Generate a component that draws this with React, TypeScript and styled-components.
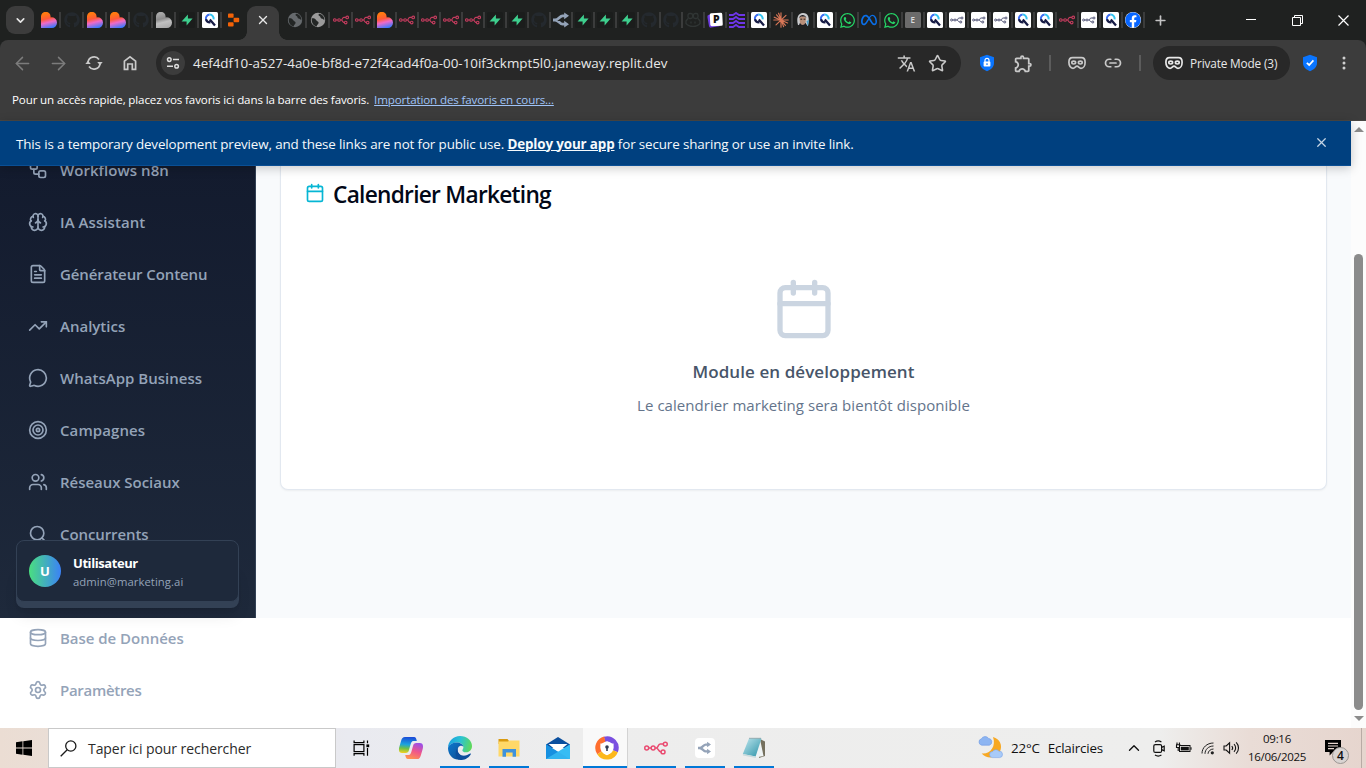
import React from "react";
import styled, { createGlobalStyle, css } from "styled-components";
import {
  ArrowLeft, ArrowRight, Brain, Calendar, ChevronDown, ChevronUp, Database, FileText,
  MessageCircle, Plus, Search, Settings, Star, Target, TrendingUp, Users, Workflow, X, Link2,
} from "lucide-react";
import { FaGithub, FaWhatsapp, FaFacebook } from "react-icons/fa";
import { FaMeta } from "react-icons/fa6";
import { MdTranslate, MdOutlineExtension } from "react-icons/md";

const Global = createGlobalStyle`
  * { box-sizing: border-box; }
  html, body { margin: 0; padding: 0; overflow: hidden; }
  body { font-family: "Open Sans", "Noto Sans", sans-serif; background: #fff; }
  svg { display: block; flex: none; }
`;

const Screen = styled.div`
  width: 1366px;
  height: 768px;
  display: flex;
  flex-direction: column;
  overflow: hidden;
`;

/* ---------- browser chrome ---------- */
const TabStrip = styled.div`
  height: 40px;
  flex: none;
  display: flex;
  align-items: center;
  background: #1f2120;
  padding-left: 6px;
`;
const TabSearch = styled.div`
  width: 28px;
  height: 28px;
  border-radius: 9px;
  background: #3c3c3c;
  color: #e6e6e6;
  display: grid;
  place-items: center;
  margin-right: 4px;
`;
const Tab = styled.div<{ $w: number; $last?: boolean }>`
  width: ${(p) => p.$w}px;
  height: 16px;
  padding-left: ${(p) => (p.$w > 22 ? 3 : 2)}px;
  border-right: 2px solid ${(p) => (p.$last ? "transparent" : "#3b3c3c")};
`;
const ActiveTab = styled.div`
  position: relative;
  align-self: flex-end;
  width: 32px;
  height: 34px;
  margin: 0 5px 0 2px;
  border-radius: 9px 9px 0 0;
  background: #3c3c3c;
  color: #e8e8e8;
  display: grid;
  place-items: center;
  padding-bottom: 6px;
  &::before, &::after {
    content: "";
    position: absolute;
    bottom: 0;
    width: 8px;
    height: 8px;
  }
  &::before { left: -8px; background: radial-gradient(circle at 0 0, transparent 7.5px, #3c3c3c 8px); }
  &::after { right: -8px; background: radial-gradient(circle at 100% 0, transparent 7.5px, #3c3c3c 8px); }
`;
const NewTab = styled.div`
  margin-left: 8px;
  color: #c4c4c4;
`;
const WindowButtons = styled.div`
  margin-left: auto;
  display: flex;
  color: #fff;
`;
const WindowButton = styled.div`
  width: 46px;
  height: 40px;
  display: grid;
  place-items: center;
`;
const ToolbarBack = styled.div`
  background: #1f2120;
  flex: none;
`;
const Toolbar = styled.div`
  height: 46px;
  display: flex;
  align-items: center;
  background: #3c3c3c;
  border-radius: 8px 8px 0 0;
  padding-left: 12px;
  color: #c9c9c9;
`;
const Tool = styled.div<{ $w: number; $c?: string }>`
  width: ${(p) => p.$w}px;
  display: grid;
  place-items: center;
  color: ${(p) => p.$c || "#c9c9c9"};
`;
const AddressBar = styled.div`
  width: 805px;
  height: 34px;
  border-radius: 17px;
  background: #282828;
  display: flex;
  align-items: center;
  padding: 0 14px 0 5px;
  gap: 12px;
`;
const SiteInfo = styled.div`
  width: 24px;
  height: 24px;
  margin-right: -4px;
  border-radius: 50%;
  background: #3c3c3c;
  display: grid;
  place-items: center;
`;
const Url = styled.span`
  flex: 1;
  white-space: nowrap;
  font-size: 13.4px;
  letter-spacing: -0.01px;
  color: #e8e8e8;
`;
const Divider = styled.div`
  width: 2px;
  height: 16px;
  background: #5c5c5c;
`;
const PrivatePill = styled.div`
  width: 137px;
  height: 34px;
  margin-left: 12px;
  border-radius: 17px;
  background: #282828;
  display: flex;
  align-items: center;
  gap: 7px;
  padding-left: 12px;
  font-size: 11.8px;
  letter-spacing: -0.14px;
  line-height: 16px;
  padding-bottom: 1px;
  white-space: nowrap;
  color: #e8e8e8;
`;
const Bookmarks = styled.div`
  flex: none;
  height: 35px;
  background: #3c3c3c;
  border-bottom: 1px solid #4a4744;
  padding: 0 0 7px 12px;
  display: flex;
  align-items: center;
  gap: 5px;
  color: #fff;
  font-size: 11.6px;
  letter-spacing: -0.14px;
  white-space: nowrap;
`;
const BookmarkLink = styled.span`
  color: #9fc3f8;
  text-decoration: underline;
`;

/* ---------- page ---------- */
const Viewport = styled.div`
  height: 607px;
  flex: none;
  display: flex;
  background: #fff;
`;
const Page = styled.div`
  width: 1351px;
  display: flex;
  flex-direction: column;
`;
const Banner = styled.div`
  position: relative;
  z-index: 3;
  height: 45px;
  flex: none;
  background: #00407f;
  border-bottom: 1px solid #0a4f95;
  box-shadow: 0 2px 10px rgba(0, 0, 0, 0.22);
  display: flex;
  align-items: center;
  padding: 1px 22px 0 16px;
  color: #f5f9fc;
  font-size: 13.4px;
  font-weight: 500;
  letter-spacing: -0.13px;
  white-space: pre;
`;
const BannerLink = styled.b`
  text-decoration: underline;
  font-weight: 700;
`;
const BannerClose = styled.div`
  margin: 0 0 2px auto;
  color: #c5d5e5;
`;
const AppBody = styled.div`
  height: 452px;
  display: flex;
  background: #f8fafc;
`;
const Sidebar = styled.aside`
  position: relative;
  width: 256px;
  flex: none;
  padding: 0 16px;
  border-right: 1px solid #334155;
  background: linear-gradient(#131b2e, #1e293b);
`;
const Nav = styled.nav`
  margin-top: -22px;
  display: flex;
  flex-direction: column;
`;
const NavItem = styled.div<{ $s?: number }>`
  height: 52px;
  flex: none;
  padding-left: 12px;
  display: flex;
  align-items: center;
  gap: 12px;
  color: #94a3b8;
  font-size: 15px;
  font-weight: 600;
  letter-spacing: ${(p) => p.$s ?? -0.1}px;
  white-space: nowrap;
`;
const ActiveItem = styled.div`
  height: 44px;
  flex: none;
  margin: 4px 0;
  border-radius: 8px;
  background: #334155;
  box-shadow: 0 10px 15px -3px rgba(0, 0, 0, 0.1), 0 4px 6px -4px rgba(0, 0, 0, 0.1);
`;
const UserCard = styled.div`
  position: absolute;
  left: 16px;
  right: 16px;
  top: 374px;
  height: 62px;
  border: 1px solid #334155;
  border-radius: 8px;
  background: #1e293b;
  display: flex;
  align-items: center;
  padding-left: 12px;
  gap: 12px;
`;
const Avatar = styled.div`
  width: 32px;
  height: 32px;
  border-radius: 50%;
  background: linear-gradient(90deg, #4ade80, #3b82f6);
  color: #fff;
  display: grid;
  place-items: center;
  font-size: 13px;
  font-weight: 700;
`;
const UserText = styled.div`
  display: flex;
  flex-direction: column;
  margin-top: 1px;
`;
const UserName = styled.span`
  font-size: 13px;
  line-height: 19px;
  font-weight: 700;
  letter-spacing: -0.43px;
  color: #fff;
`;
const UserMail = styled.span`
  font-size: 11.3px;
  line-height: 17px;
  letter-spacing: 0.06px;
  color: #94a3b8;
`;
const Main = styled.main`
  flex: 1;
  padding: 0 24px;
`;
const Card = styled.section`
  height: 324px;
  background: #fff;
  border: 1px solid #e2e8f0;
  border-top: 0;
  border-radius: 0 0 8px 8px;
  box-shadow: 0 1px 2px rgba(0, 0, 0, 0.05);
  display: flex;
  flex-direction: column;
  align-items: center;
`;
const CardHead = styled.div`
  align-self: stretch;
  display: flex;
  align-items: center;
  gap: 8px;
  height: 56px;
  padding-left: 24px;
  color: #06b6d4;
  & > svg { margin-bottom: 2px; }
`;
const CardTitle = styled.h1`
  margin: 0;
  font-size: 22.7px;
  font-weight: 600;
  letter-spacing: -0.73px;
  white-space: nowrap;
  color: #020817;
`;
const EmptyIcon = styled.div`
  margin-top: 55px;
  color: #cbd5e1;
`;
const EmptyTitle = styled.h2`
  margin: 17px 0 0;
  font-size: 17px;
  line-height: 28px;
  font-weight: 600;
  letter-spacing: 0.08px;
  color: #475569;
`;
const EmptyText = styled.p`
  margin: 7px 0 0;
  font-size: 15px;
  line-height: 24px;
  letter-spacing: 0.05px;
  color: #64748b;
`;
const Scrollbar = styled.div`
  width: 15px;
  background: #fcfcfc;
  display: flex;
  flex-direction: column;
  align-items: center;
  padding: 6px 0;
`;
const ScrollThumb = styled.div`
  width: 9px;
  height: 456px;
  margin: auto 0 6px;
  border-radius: 5px;
  background: #8b8b8b;
`;
const ScrollArrow = styled.div<{ $down?: boolean }>`
  border: 5px solid transparent;
  ${(p) => (p.$down
    ? css`border-top-color: #8b8b8b; border-bottom: 0; margin-bottom: 1px;`
    : css`border-bottom-color: #8b8b8b; border-top: 0;`)}
`;

/* ---------- taskbar ---------- */
const Taskbar = styled.div`
  height: 40px;
  flex: none;
  display: flex;
  background: linear-gradient(90deg, #ebddd3 0, #eaded6 50px, #e9eaf0 350px, #ededed 560px, #eeeeed 1160px, #e9dcd6 1250px, #e6d5ce 1366px);
  color: #111;
`;
const StartButton = styled.div`
  width: 48px;
  display: grid;
  place-items: center;
`;
const SearchBox = styled.div`
  width: 288px;
  margin-right: 1px;
  border: 1px solid #c9c9c9;
  background: #fff;
  display: flex;
  align-items: center;
  gap: 11px;
  padding-left: 11px;
  font-size: 14px;
  letter-spacing: -0.07px;
  color: #2b2b2b;
`;
const TaskApp = styled.div<{ $line?: boolean; $active?: boolean }>`
  width: 49px;
  display: grid;
  place-items: center;
  ${(p) => p.$line && css`
    background: linear-gradient(#0078d7, #0078d7) center bottom / 40px 2px no-repeat;
  `}
  ${(p) => p.$active && css`
    background: linear-gradient(#0078d7, #0078d7) center bottom / 100% 2px no-repeat, #f9f9f9;
    border-right: 1px solid #d3d3d3;
    width: 45px;
    margin: 0 3px 0 1px;
    padding-left: 3px;
  `}
`;
const Tray = styled.div`
  margin-left: auto;
  display: flex;
  align-items: center;
`;
const Weather = styled.div`
  display: flex;
  align-items: center;
  font-size: 13.4px;
  letter-spacing: -0.2px;
  white-space: nowrap;
  gap: 8px;
  width: 143px;
`;
const TrayIcon = styled.div<{ $w: number }>`
  width: ${(p) => p.$w}px;
  display: grid;
  place-items: center;
`;
const Clock = styled.div`
  width: 72px;
  font-size: 11.5px;
  line-height: 18px;
  letter-spacing: -0.3px;
  text-align: center;
  white-space: nowrap;
  padding-bottom: 1px;
`;
const Notifications = styled.div`
  position: relative;
  width: 48px;
  height: 40px;
  padding: 12px 0 0 12px;
`;
const Badge = styled.span`
  position: absolute;
  left: 19px;
  top: 19px;
  width: 17px;
  height: 17px;
  border-radius: 50%;
  border: 1px solid #9b9692;
  background: #d9d4d2;
  display: grid;
  place-items: center;
  font-size: 12px;
  line-height: 15px;
  font-weight: 600;
`;
const DesktopEdge = styled.div`
  width: 5px;
  height: 40px;
  border-left: 1px solid #b9aba5;
`;

/* ---------- favicons ---------- */
const Lovable = ({ grey }: { grey?: boolean }) => (
  <svg width="16" height="16" viewBox="0 0 16 16">
    <defs>
      <linearGradient id={grey ? "lvG" : "lvC"} x1="0.3" y1="0" x2="0.55" y2="1">
        <stop offset="0.1" stopColor={grey ? "#a8a8a8" : "#ff7a10"} />
        <stop offset="0.42" stopColor={grey ? "#8c8c8c" : "#ff5a38"} />
        <stop offset="0.65" stopColor={grey ? "#c0c0c0" : "#ef6ac8"} />
        <stop offset="1" stopColor={grey ? "#aaaaaa" : "#3d78ff"} />
      </linearGradient>
    </defs>
    <path d="M0 4.8A4.8 4.8 0 0 1 9.6 4.4V5.4A5.3 5.3 0 0 1 16 10.6A5.3 5.3 0 0 1 10.8 16H0Z" fill={`url(#${grey ? "lvG" : "lvC"})`} />
  </svg>
);
const Supabase = () => (
  <svg width="16" height="16" viewBox="0 0 16 16">
    <rect width="16" height="16" rx="2" fill="#1b1d1c" />
    <path d="M8.9 2.4V6.6H13.6L7.6 13.6V9.4H2.6Z" fill="#3ecf8e" />
  </svg>
);
const QIcon = () => (
  <svg width="16" height="16" viewBox="0 0 16 16">
    <rect width="16" height="16" rx="1.5" fill="#fff" />
    <g fill="none" strokeWidth="2">
      <path d="M4.2 8.2A4 4 0 0 1 7.6 2.6" stroke="#3c6df0" />
      <path d="M7.6 2.6A4 4 0 0 1 11.6 7.4" stroke="#35c5f0" />
      <path d="M4 7.2A4.2 4.2 0 0 0 8.4 10.4M7.8 7.6L13 13.4" stroke="#171c45" strokeWidth="2.3" />
    </g>
  </svg>
);
const Replit = () => (
  <svg width="16" height="16" viewBox="0 0 16 16" fill="#f26207">
    <rect x="3" y="1.5" width="5.6" height="4.3" rx=".9" /><rect x="8.6" y="5.8" width="5.6" height="4.4" rx=".9" /><rect x="3" y="10.2" width="5.6" height="4.3" rx=".9" />
  </svg>
);
const Globe = ({ c }: { c: string }) => (
  <svg width="16" height="16" viewBox="0 0 16 16">
    <circle cx="8" cy="8" r="7.2" fill={c} />
    <path d="M1.8 6.2C4 6 5.6 6.6 6.3 8.2S8.8 9.2 8.6 11C8.4 12.4 7 12.6 6.6 14.4C3.4 13.7 1.2 10.5 1.8 6.2ZM9 1.8C8.1 3 8.6 3.8 9.8 4.2S10 6 11.4 6.4S13.8 7 14.3 8.6C14.8 5.2 12.6 2.4 9 1.8Z" fill="#232625" />
  </svg>
);
const N8n = ({ c, size = 16, w = 1.1 }: { c: string; size?: number; w?: number }) => (
  <svg width={size} height={size} viewBox="0 0 16 16" fill="none" stroke={c} strokeWidth={w}>
    <circle cx="1.8" cy="8" r="1.3" /><circle cx="6.1" cy="8" r="1.3" />
    <circle cx="14.2" cy="5.4" r="1.3" /><circle cx="12.7" cy="10.6" r="1.3" />
    <path d="M3.1 8H4.8M7.4 8H8.2C9.6 8 9.2 5.4 10.8 5.4H12.9M8.2 8C9.6 8 9.4 10.6 11.4 10.6" />
  </svg>
);
const N8nWhite = () => (
  <svg width="16" height="16" viewBox="0 0 16 16">
    <rect width="16" height="16" rx="1.5" fill="#fff" />
    <g fill="none" stroke="#4c4f72" strokeWidth=".95">
      <circle cx="2.6" cy="8" r="1" /><circle cx="6" cy="8" r="1" /><circle cx="13" cy="6" r="1" /><circle cx="11.8" cy="10" r="1" />
      <path d="M3.6 8H5M7 8H8C9 8 8.8 6 10 6H12M8 8C9 8 9 10 10.8 10" />
    </g>
  </svg>
);
const Fork = ({ size = 16 }: { size?: number }) => (
  <svg width={size} height={size} viewBox="0 0 16 16" fill="none" stroke="#94a3b8" strokeWidth="2.8">
    <path d="M12.5 3.8H9.5C6.8 3.8 5.5 8 2 8H0M2 8C5.5 8 6.8 12.2 9.5 12.2H12.5" />
    <path d="M11.2 .4L16 3.8L11.2 7.2ZM11.2 8.8L16 12.2L11.2 15.6Z" fill="#94a3b8" stroke="none" />
  </svg>
);
const CopilotFace = () => (
  <svg width="16" height="16" viewBox="0 0 16 16" fill="none" stroke="#303534" strokeWidth="1.3">
    <rect x="3" y="1.5" width="4.6" height="5" rx="1.8" /><rect x="8.4" y="1.5" width="4.6" height="5" rx="1.8" />
    <path d="M3 6.5L1 9V11.5C4 15.3 12 15.3 15 11.5V9L13 6.5M6 9.5V11.5M10 9.5V11.5" />
  </svg>
);
const PaperP = () => (
  <svg width="16" height="16" viewBox="0 0 16 16">
    <rect x="1" y="2" width="12" height="13" rx="2" fill="#6d3be0" transform="rotate(-10 7 8)" />
    <rect x="3" y="1" width="12.5" height="13" rx="1.5" fill="#fff" transform="rotate(-3 9 7)" />
    <text x="6" y="11.4" fontFamily="Open Sans" fontWeight="800" fontSize="10.5" fill="#111">P</text>
  </svg>
);
const Waves = () => (
  <svg width="16" height="16" viewBox="0 0 16 16" fill="none" stroke="#6d35e8" strokeWidth="1.9">
    <path d="M0 3H4L7 1L10 3H16M0 7H4L7 5L10 7H16M0 11H4L7 9L10 11H16M0 15H4L7 13L10 15H16" />
  </svg>
);
const Claude = () => (
  <svg width="16" height="16" viewBox="0 0 16 16" stroke="#d97757" strokeWidth="1.15" strokeLinecap="round">
    <path d="M8 .8V15.2M.8 8H15.2M3.6 2.8L12.4 13.4M13 3.4L3 12.8M5.6 1.2L10.6 14.6M1.2 5.2L14.6 11" />
  </svg>
);
const Portrait = () => (
  <svg width="16" height="16" viewBox="0 0 16 16">
    <path d="M3 13C1 6 3 1 8 1S15 5 13 14Z" fill="#c9cbcd" />
    <path d="M4.5 6C5 3.4 10 3 11 6L10.5 11C9 14 6 14 5 11Z" fill="#b98f78" />
    <path d="M4 6C5 2 10 1.8 11.5 6L9.5 4.6H6ZM3.6 14L5 10.8C6.4 13.8 9 13.8 10.4 10.8L12.5 14Z" fill="#1c1c20" />
    <path d="M5.4 7.2H7.2M8.6 7.2H10.4" stroke="#222" strokeWidth="1" />
    <path d="M11.5 9L14 8L12.8 14.5Z" fill="#4aa0c8" />
  </svg>
);
const LetterE = () => (
  <svg width="16" height="16" viewBox="0 0 16 16">
    <rect width="16" height="16" rx="1.5" fill="#6b6b6b" />
    <text x="5.6" y="10.9" fontFamily="Open Sans" fontWeight="600" fontSize="8" fill="#ddd">E</text>
  </svg>
);

const favicon = (kind: string) => {
  switch (kind) {
    case "lov": return <Lovable />;
    case "lovg": return <Lovable grey />;
    case "gh": return <FaGithub size={16} color="#24292e" />;
    case "supa": return <Supabase />;
    case "q": return <QIcon />;
    case "rep": return <Replit />;
    case "g1": return <Globe c="#666a6d" />;
    case "g2": return <Globe c="#9a9a9a" />;
    case "n": return <N8n c="#c43c5e" />;
    case "nw": return <N8nWhite />;
    case "fork": return <Fork />;
    case "cop": return <CopilotFace />;
    case "p": return <PaperP />;
    case "wave": return <Waves />;
    case "cl": return <Claude />;
    case "man": return <Portrait />;
    case "wa": return <FaWhatsapp size={17} color="#25d366" />;
    case "meta": return <FaMeta size={16} color="#0a6fe8" />;
    case "e": return <LetterE />;
    default: return <FaFacebook size={16} color="#0866ff" style={{ background: "#fff", borderRadius: 8 }} />;
  }
};
const leftTabs = "lov gh lov lov gh lovg supa q rep".split(" ");
const rightTabs = "g1 g2 n n lov n n n n supa supa gh fork supa supa supa gh gh cop p wave q cl man q wa meta wa e q nw nw nw q q n nw q fb".split(" ");

/* ---------- toolbar glyphs ---------- */
const HomeGlyph = () => (
  <svg width="14" height="16" viewBox="0 0 14 16" fill="none" stroke="currentColor" strokeWidth="1.7">
    <path d="M1.4 6.2L7 1.8L12.6 6.2V14.4H9.3V9H4.7V14.4H1.4Z" />
  </svg>
);
const Mask = () => (
  <svg width="18" height="14" viewBox="0 0 18 14" fill="none" stroke="currentColor" strokeWidth="1.7">
    <path d="M4.5 1.6H13.5C16 1.6 17.1 3.8 17.1 6.2C17.1 9.6 15.4 12.3 13 12.3C11 12.3 10.6 10.2 9 10.2S7 12.3 5 12.3C2.6 12.3 .9 9.6 .9 6.2C.9 3.8 2 1.6 4.5 1.6Z" />
    <ellipse cx="5.7" cy="6.6" rx="1.9" ry="1.4" /><ellipse cx="12.3" cy="6.6" rx="1.9" ry="1.4" />
  </svg>
);
const Reload = () => (
  <svg width="18" height="16" viewBox="0 0 18 16" fill="none" stroke="currentColor" strokeWidth="1.7">
    <path d="M3 7.2A6.1 6.1 0 0 1 14 4.4M15 8.8A6.1 6.1 0 0 1 4 11.6" />
    <path d="M.3 9H5.8L3 5.8ZM12.2 7H17.7L15 10.2Z" fill="currentColor" stroke="none" />
  </svg>
);
const Tune = () => (
  <svg width="14" height="14" viewBox="0 0 14 14" fill="none" stroke="#dedede" strokeWidth="1.5">
    <circle cx="3.3" cy="3.6" r="1.8" /><path d="M7 3.6H13M1 10.3H7" /><circle cx="10.6" cy="10.3" r="1.8" />
  </svg>
);
const Shield = ({ lock }: { lock?: boolean }) => (
  <svg width="16" height="18" viewBox="0 0 16 18">
    <path d="M8 .8L15 3.2V9C15 13 12 15.6 8 17.2C4 15.6 1 13 1 9V3.2Z" fill="#0a75ff" />
    {lock ? (
      <g><path d="M6 8V6.3A2 2 0 0 1 10 6.3V8" fill="none" stroke="#fff" strokeWidth="1.2" /><rect x="4.6" y="7.6" width="6.8" height="5" rx=".8" fill="#fff" /><path d="M8 9.2V11" stroke="#0a75ff" strokeWidth="1.2" /></g>
    ) : <path d="M4.8 8.8L7.2 11L11.4 6.4" fill="none" stroke="#fff" strokeWidth="1.7" />}
  </svg>
);
const Dots = () => (
  <svg width="4" height="14" viewBox="0 0 4 14" fill="#d0d0d0"><circle cx="2" cy="2" r="1.5" /><circle cx="2" cy="7" r="1.5" /><circle cx="2" cy="12" r="1.5" /></svg>
);

/* ---------- taskbar glyphs ---------- */
const WinLogo = () => (
  <svg width="16" height="16" viewBox="0 0 16 16" fill="#000"><path d="M0 2.2L6.5 1.3V7.6H0ZM7.3 1.2L16 0V7.6H7.3ZM0 8.4H6.5V14.7L0 13.8ZM7.3 8.4H16V16L7.3 14.8Z" /></svg>
);
const Magnifier = () => (
  <svg width="17" height="17" viewBox="0 0 17 17" fill="none" stroke="#1a1a1a" strokeWidth="1.3"><circle cx="10.8" cy="6" r="5.1" /><path d="M7.2 9.7L.7 16.2" /></svg>
);
const TaskView = () => (
  <svg width="17" height="16" viewBox="0 0 17 16" fill="none" stroke="#000" strokeWidth="1.2">
    <rect x="1.1" y="4.6" width="9.8" height="7" /><path d="M1.1 .4V2.6H10.9V.4M1.1 15.8V13.6H10.9V15.8M14.5 .4V3.2M14.5 8V15.8" /><rect x="13.4" y="4.4" width="2.8" height="2.8" fill="#000" stroke="none" />
  </svg>
);
const Copilot = () => (
  <svg width="26" height="24" viewBox="0 0 26 24">
    <defs>
      <linearGradient id="cpA" x1=".3" y1="0" x2=".2" y2="1"><stop offset="0" stopColor="#1b4dd8" /><stop offset=".45" stopColor="#1aa3e0" /><stop offset=".7" stopColor="#6cc04a" /><stop offset="1" stopColor="#f7d21e" /></linearGradient>
      <linearGradient id="cpB" x1=".7" y1="0" x2=".3" y2="1"><stop offset="0" stopColor="#9b4fe8" /><stop offset=".5" stopColor="#f0568a" /><stop offset="1" stopColor="#ff9350" /></linearGradient>
    </defs>
    <path d="M7 1H16C18 1 18.3 3 18.8 5H15.5C13.6 5 13 6.8 12.4 9L11 14C10.4 16.2 9.6 17 7.6 17H4C1 17 .5 14 1.3 11L3.2 4.6C3.9 2.2 4.8 1 7 1Z" fill="url(#cpA)" />
    <path d="M19 23H10C8 23 7.7 21 7.2 19H10.5C12.4 19 13 17.2 13.6 15L15 10C15.6 7.8 16.4 7 18.4 7H22C25 7 25.5 10 24.7 13L22.8 19.4C22.1 21.8 21.2 23 19 23Z" fill="url(#cpB)" />
  </svg>
);
const Edge = () => (
  <svg width="24" height="24" viewBox="0 0 24 24">
    <defs>
      <linearGradient id="eg" x1="0" y1=".3" x2="1" y2=".5"><stop offset="0" stopColor="#1a9fe0" /><stop offset=".5" stopColor="#2bc3d2" /><stop offset="1" stopColor="#5fd95a" /></linearGradient>
      <linearGradient id="eb" x1="0" y1="0" x2="1" y2="1"><stop offset="0" stopColor="#0b78cf" /><stop offset="1" stopColor="#114a8b" /></linearGradient>
    </defs>
    <path d="M0 12C0 5 5.5 0 12 0C19 0 24 4.8 24 10C24 14 21 16.3 18 16.3C15 16.3 14.4 15 14.4 14.2C14.4 13.3 15.4 13 15.4 11.2C15.4 8.6 12.4 6.6 9 6.6C4.8 6.6 1 8.8 0 12Z" fill="url(#eg)" />
    <path d="M0 12C.8 8.6 5 6.6 9 6.6C12 6.6 15 8.4 15.3 10.8C14.6 9.8 13.2 9.6 12 10C8 11.5 8.6 20 17 21C14 23.6 10.8 24 9 23.6C3.6 22.6 0 17.8 0 12Z" fill="url(#eb)" />
    <path d="M9.7 12C8.6 17 13 20.5 17.5 19.6C20 19 21.7 17.8 22.3 17.6C22.9 17.4 23 18 22.7 18.4C20 22.6 16 24 12.5 24C7 23.4 6.4 15.6 9.7 12Z" fill="#0d4f9c" />
  </svg>
);
const Explorer = () => (
  <svg width="22" height="20" viewBox="0 0 22 20">
    <path d="M.5 1H9.5L11 3V6H.5Z" fill="#d99a10" /><path d="M.5 3.4H10L11.5 2.6H21.5V18.4H.5Z" fill="#ffd868" />
    <path d="M4.5 18.8V11H18V18.8H14.6V14.4H8V18.8Z" fill="#3f92dc" />
  </svg>
);
const Mail = () => (
  <svg width="24" height="24" viewBox="0 0 24 24">
    <path d="M0 8.4L12 1L24 8.4V12H0Z" fill="#0a4f9e" /><path d="M2.5 8H21.5L12 16Z" fill="#fff" />
    <path d="M0 8.4L12 16L24 8.4V23H0Z" fill="#27b0ee" /><path d="M0 8.4L24 23H0Z" fill="#1790e0" /><path d="M24 8.4L0 23H24Z" fill="#3cc0f5" opacity=".75" />
  </svg>
);
const SecureBrowser = () => (
  <svg width="24" height="24" viewBox="0 0 24 24" fill="none" strokeWidth="5.2">
    <path d="M9.5 3.2A9 9 0 0 1 20.4 15.2" stroke="#7a4fe0" /><path d="M20.4 15.2A9 9 0 0 1 4.4 16.8" stroke="#fcb81c" /><path d="M4.4 16.8A9 9 0 0 1 9.8 3.1" stroke="#ff6e2e" />
    <path d="M5.4 7.6C9.8 7.4 10.6 5.4 12 5.4S14.6 7.4 18.6 7.6C19 13.8 16.4 17.8 12 19.2C7.6 17.8 5 13.8 5.4 7.6Z" fill="#fff" stroke="none" />
    <circle cx="12" cy="11" r="1.8" fill="#333b52" stroke="none" /><path d="M12 11V15" stroke="#333b52" strokeWidth="1.6" />
  </svg>
);
const ForkApp = () => (
  <svg width="20" height="20" viewBox="0 0 20 20"><rect width="20" height="20" rx="4" fill="#fff" /><g transform="translate(3 3.5)"><Fork size={13} /></g></svg>
);
const Notepad = () => (
  <svg width="24" height="24" viewBox="0 0 24 24">
    <defs><linearGradient id="np" x1="0" y1="0" x2="1" y2="1"><stop offset="0" stopColor="#bfe6ee" /><stop offset="1" stopColor="#2c93a8" /></linearGradient></defs>
    <path d="M18 3L23 5.6V20L17 22Z" fill="#75705e" /><path d="M18 3L21.5 20L13.5 21.5Z" fill="#eef3f4" />
    <path d="M7 2.4H19.5L13.6 20.5L.8 18Z" fill="url(#np)" /><path d="M.8 18L13.6 20.5L14 22L1 19.4Z" fill="#c9dadd" /><path d="M7.5 2.4H19" stroke="#6d8a90" strokeWidth="1.4" strokeDasharray="1 1" />
  </svg>
);
const WeatherIcon = () => (
  <svg width="25" height="24" viewBox="0 0 25 24">
    <path d="M15 1C22 3 24.8 9.2 22 15.6C19 22 9.4 24 3.6 17.4C12 18.5 18.4 10.6 15 1Z" fill="#f7a823" />
    <path d="M3.6 9.2A3.3 3.3 0 0 1 3.4 2.8A4.2 4.2 0 0 1 10.6 2.4A3.5 3.5 0 0 1 11.4 9.2Z" fill="#8db5f2" stroke="#6b99e4" strokeWidth=".6" />
    <path d="M14.6 21.6A3 3 0 0 1 14.6 15.6A3.8 3.8 0 0 1 21 15.2A3.2 3.2 0 0 1 21.6 21.6Z" fill="#a8caf8" stroke="#7ba5ea" strokeWidth=".6" />
  </svg>
);
const MeetNow = () => (
  <svg width="14" height="17" viewBox="0 0 14 17" fill="none" stroke="#111" strokeWidth="1.2"><rect x="1.8" y="4.6" width="7.8" height="7.8" rx="1.5" /><path d="M9.6 7.4L12.2 6.2V10.8L9.6 9.6M3 2C5 .7 7.4 .7 9.4 2M3 15C5 16.3 7.4 16.3 9.4 15" /></svg>
);
const Battery = () => (
  <svg width="17" height="12" viewBox="0 0 17 12" fill="none" stroke="#111"><rect x="4.5" y="3.5" width="10.5" height="6" /><rect x="5.8" y="4.8" width="8" height="3.6" fill="#111" stroke="none" /><path d="M16 5.3V7.7M1 2.7H5.4M2 .4V2.5M4.4 .4V2.5M1.5 3V5.5H4.5M3.2 5.5V9" strokeWidth="1.1" /></svg>
);
const Wifi = () => (
  <svg width="14" height="14" viewBox="0 0 14 14" fill="none" stroke="#222" strokeWidth="1"><path d="M1 12.5C1 6.5 6 2 12.5 2M4 12.8C4 8.5 7.6 5 12.5 5M7 12.8C7 10.4 9.4 8 12.5 8" /><circle cx="11.3" cy="11.8" r="1.6" fill="#222" stroke="none" /></svg>
);
const Speaker = () => (
  <svg width="17" height="14" viewBox="0 0 17 14" fill="none" stroke="#111" strokeWidth="1.1"><path d="M1 5H3.2L6.6 1.8V12.2L3.2 9H1ZM8.8 5A3 3 0 0 1 8.8 9M11 3.2A5.2 5.2 0 0 1 11 10.8M13.2 1.4A8 8 0 0 1 13.2 12.6" /></svg>
);
const ChatIcon = () => (
  <svg width="16" height="16" viewBox="0 0 16 16"><path d="M0 0H16V12H8L4.6 15.5V12H0Z" fill="#000" /><path d="M3 3.4H13M3 6H13M3 8.6H9" stroke="#e6d5ce" strokeWidth="1.1" /></svg>
);

const firstItems: [React.ElementType, string, number][] = [
  [Workflow, "Workflows n8n", 0.05],
  [Brain, "IA Assistant", 0.07],
  [FileText, "Générateur Contenu", -0.1],
  [TrendingUp, "Analytics", 0],
  [MessageCircle, "WhatsApp Business", 0.02],
  [Target, "Campagnes", 0.1],
  [Users, "Réseaux Sociaux", -0.03],
  [Search, "Concurrents", -0.1],
];
const lastItems: [React.ElementType, string, number][] = [
  [Database, "Base de Données", -0.03],
  [Settings, "Paramètres", -0.3],
];
const renderItem = ([Icon, label, s]: [React.ElementType, string, number]) => (
  <NavItem key={label} $s={s}><Icon size={20} strokeWidth={2} />{label}</NavItem>
);

export default function App() {
  return (
    <Screen>
      <Global />
      <TabStrip>
        <TabSearch><ChevronDown size={13} strokeWidth={3} /></TabSearch>
        {leftTabs.map((k, i) => <Tab key={i} $w={23} $last={i === leftTabs.length - 1}>{favicon(k)}</Tab>)}
        <ActiveTab><X size={14} strokeWidth={2.4} /></ActiveTab>
        {rightTabs.map((k, i) => <Tab key={i} $w={i < 3 ? 23 : 22}>{favicon(k)}</Tab>)}
        <NewTab><Plus size={15} strokeWidth={2.6} /></NewTab>
        <WindowButtons>
          <WindowButton><svg width="10" height="10"><path d="M0 4.5H10" stroke="#fff" /></svg></WindowButton>
          <WindowButton><svg width="11" height="11" fill="none" stroke="#fff"><path d="M.5 2.5H8.5V10.5H.5ZM2.5 2.5V.5H10.5V8.5H8.5" /></svg></WindowButton>
          <WindowButton><svg width="11" height="11"><path d="M.5 .5L10.5 10.5M10.5 .5L.5 10.5" stroke="#fff" strokeWidth="1.2" /></svg></WindowButton>
        </WindowButtons>
      </TabStrip>
      <ToolbarBack>
        <Toolbar>
          <Tool $w={20} $c="#7c7c7c"><ArrowLeft size={21} strokeWidth={1.7} /></Tool>
          <Tool $w={52} $c="#7c7c7c"><ArrowRight size={21} strokeWidth={1.7} /></Tool>
          <Tool $w={20}><Reload /></Tool>
          <Tool $w={52}><HomeGlyph /></Tool>
          <AddressBar>
            <SiteInfo><Tune /></SiteInfo>
            <Url>4ef4df10-a527-4a0e-bf8d-e72f4cad4f0a-00-10if3ckmpt5l0.janeway.replit.dev</Url>
            <MdTranslate size={19} />
            <Star size={19} strokeWidth={2} />
          </AddressBar>
          <Tool $w={52}><Shield lock /></Tool>
          <Tool $w={20}><MdOutlineExtension size={21} /></Tool>
          <Tool $w={34}><Divider /></Tool>
          <Tool $w={20}><Mask /></Tool>
          <Tool $w={52}><Link2 size={18} strokeWidth={2.3} /></Tool>
          <Divider />
          <PrivatePill><Mask />Private Mode (3)</PrivatePill>
          <Tool $w={40}><Shield /></Tool>
          <Tool $w={27}><Dots /></Tool>
        </Toolbar>
      </ToolbarBack>
      <Bookmarks>
        <span>Pour un accès rapide, placez vos favoris ici dans la barre des favoris.</span>
        <BookmarkLink>Importation des favoris en cours...</BookmarkLink>
      </Bookmarks>

      <Viewport>
        <Page>
          <Banner>
            <span>This is a temporary development preview, and these links are not for public use. <BannerLink>Deploy your app</BannerLink> for secure sharing or use an invite link.</span>
            <BannerClose><X size={15} strokeWidth={2} /></BannerClose>
          </Banner>
          <AppBody>
            <Sidebar>
              <Nav>
                {firstItems.map(renderItem)}
                <ActiveItem />
                {lastItems.map(renderItem)}
              </Nav>
              <UserCard>
                <Avatar>U</Avatar>
                <UserText><UserName>Utilisateur</UserName><UserMail>admin@marketing.ai</UserMail></UserText>
              </UserCard>
            </Sidebar>
            <Main>
              <Card>
                <CardHead><Calendar size={20} /><CardTitle>Calendrier Marketing</CardTitle></CardHead>
                <EmptyIcon><Calendar size={64} /></EmptyIcon>
                <EmptyTitle>Module en développement</EmptyTitle>
                <EmptyText>Le calendrier marketing sera bientôt disponible</EmptyText>
              </Card>
            </Main>
          </AppBody>
        </Page>
        <Scrollbar>
          <ScrollArrow /><ScrollThumb /><ScrollArrow $down />
        </Scrollbar>
      </Viewport>

      <Taskbar>
        <StartButton><WinLogo /></StartButton>
        <SearchBox><Magnifier />Taper ici pour rechercher</SearchBox>
        <TaskApp><TaskView /></TaskApp>
        <TaskApp><Copilot /></TaskApp>
        <TaskApp $line><Edge /></TaskApp>
        <TaskApp $line><Explorer /></TaskApp>
        <TaskApp><Mail /></TaskApp>
        <TaskApp $active><SecureBrowser /></TaskApp>
        <TaskApp $line><N8n c="#ea4b71" size={24} w={1} /></TaskApp>
        <TaskApp $line><ForkApp /></TaskApp>
        <TaskApp $line><Notepad /></TaskApp>
        <Tray>
          <Weather><WeatherIcon /><span>22°C</span><span>Eclaircies</span></Weather>
          <TrayIcon $w={26}><ChevronUp size={18} strokeWidth={1.8} /></TrayIcon>
          <TrayIcon $w={24}><MeetNow /></TrayIcon>
          <TrayIcon $w={24}><Battery /></TrayIcon>
          <TrayIcon $w={26}><Wifi /></TrayIcon>
          <TrayIcon $w={20}><Speaker /></TrayIcon>
          <Clock>09:16<br />16/06/2025</Clock>
          <Notifications><ChatIcon /><Badge>4</Badge></Notifications>
          <DesktopEdge />
        </Tray>
      </Taskbar>
    </Screen>
  );
}
